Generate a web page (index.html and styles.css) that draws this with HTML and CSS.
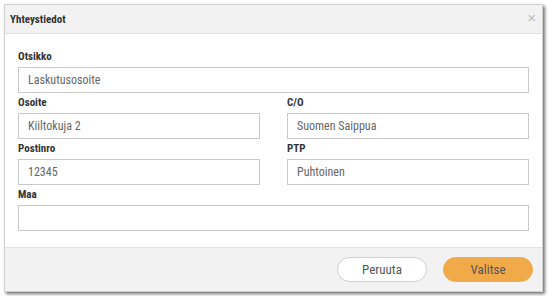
FILE: index.html
```html
<!DOCTYPE html>
<html lang="fi">
<head>
    <meta charset="UTF-8">
    <title>Yhteystiedot</title>
    <link rel="stylesheet" href="styles.css">
</head>
<body>
    <div class="dialog">
        <div class="dialog-header">
            <span class="dialog-title">Yhteystiedot</span>
            <span class="dialog-close">&times;</span>
        </div>
        <div class="dialog-body">
            <div class="field full">
                <label>Otsikko</label>
                <div class="input">Laskutusosoite</div>
            </div>
            <div class="field">
                <label>Osoite</label>
                <div class="input">Kiiltokuja 2</div>
            </div>
            <div class="field">
                <label>C/O</label>
                <div class="input">Suomen Saippua</div>
            </div>
            <div class="field">
                <label>Postinro</label>
                <div class="input">12345</div>
            </div>
            <div class="field">
                <label>PTP</label>
                <div class="input">Puhtoinen</div>
            </div>
            <div class="field full">
                <label>Maa</label>
                <div class="input"></div>
            </div>
        </div>
        <div class="dialog-footer">
            <button class="btn btn-cancel">Peruuta</button>
            <button class="btn btn-ok">Valitse</button>
        </div>
    </div>
</body>
</html>
```

FILE: styles.css
```css
body {
    margin: 0;
    padding: 4px;
    background-color: #fff;
    font-family: "Roboto Condensed", "Liberation Sans Narrow", "DejaVu Sans Condensed", sans-serif;
    font-size: 12px;
    color: #333;
}
.dialog {
    width: 537px;
    background-color: #fff;
    border: 1px solid #d0d0d0;
    box-shadow: 2px 2px 3px rgba(0,0,0,0.55);
}
.dialog-header {
    height: 28px;
    display: flex;
    align-items: center;
    justify-content: space-between;
    padding: 0 6px 0 5px;
    background-color: #f2f2f2;
    border-bottom: 1px solid #e0e0e0;
}
.dialog-title {
    font-weight: 700;
    font-size: 11px;
    color: #333;
}
.dialog-close {
    font-family: "Liberation Sans", sans-serif;
    font-size: 15px;
    color: #bbb;
    margin-top: -4px;
}
.dialog-body {
    display: grid;
    grid-template-columns: 1fr 1fr;
    column-gap: 27px;
    padding: 13px 13px 16px 13px;
}
.field.full {
    grid-column: 1 / 3;
}
.field label {
    display: block;
    height: 20px;
    line-height: 20px;
    font-weight: 700;
    font-size: 11px;
    color: #333;
}
.input {
    height: 24px;
    line-height: 24px;
    border: 1px solid #c8c8c8;
    padding: 0 9px;
    color: #666;
    font-size: 12px;
}
.dialog-footer {
    display: flex;
    justify-content: flex-end;
    gap: 16px;
    padding: 9px 9px 9px 0;
    background-color: #f2f2f2;
    border-top: 1px solid #e0e0e0;
}
.btn {
    width: 90px;
    height: 25px;
    border-radius: 13px;
    font-family: inherit;
    font-size: 13px;
    color: #555;
    cursor: pointer;
}
.btn-cancel {
    background-color: #fff;
    border: 1px solid #d0d0d0;
}
.btn-ok {
    background-color: #f0aa4a;
    border: 1px solid #f0aa4a;
}
```
